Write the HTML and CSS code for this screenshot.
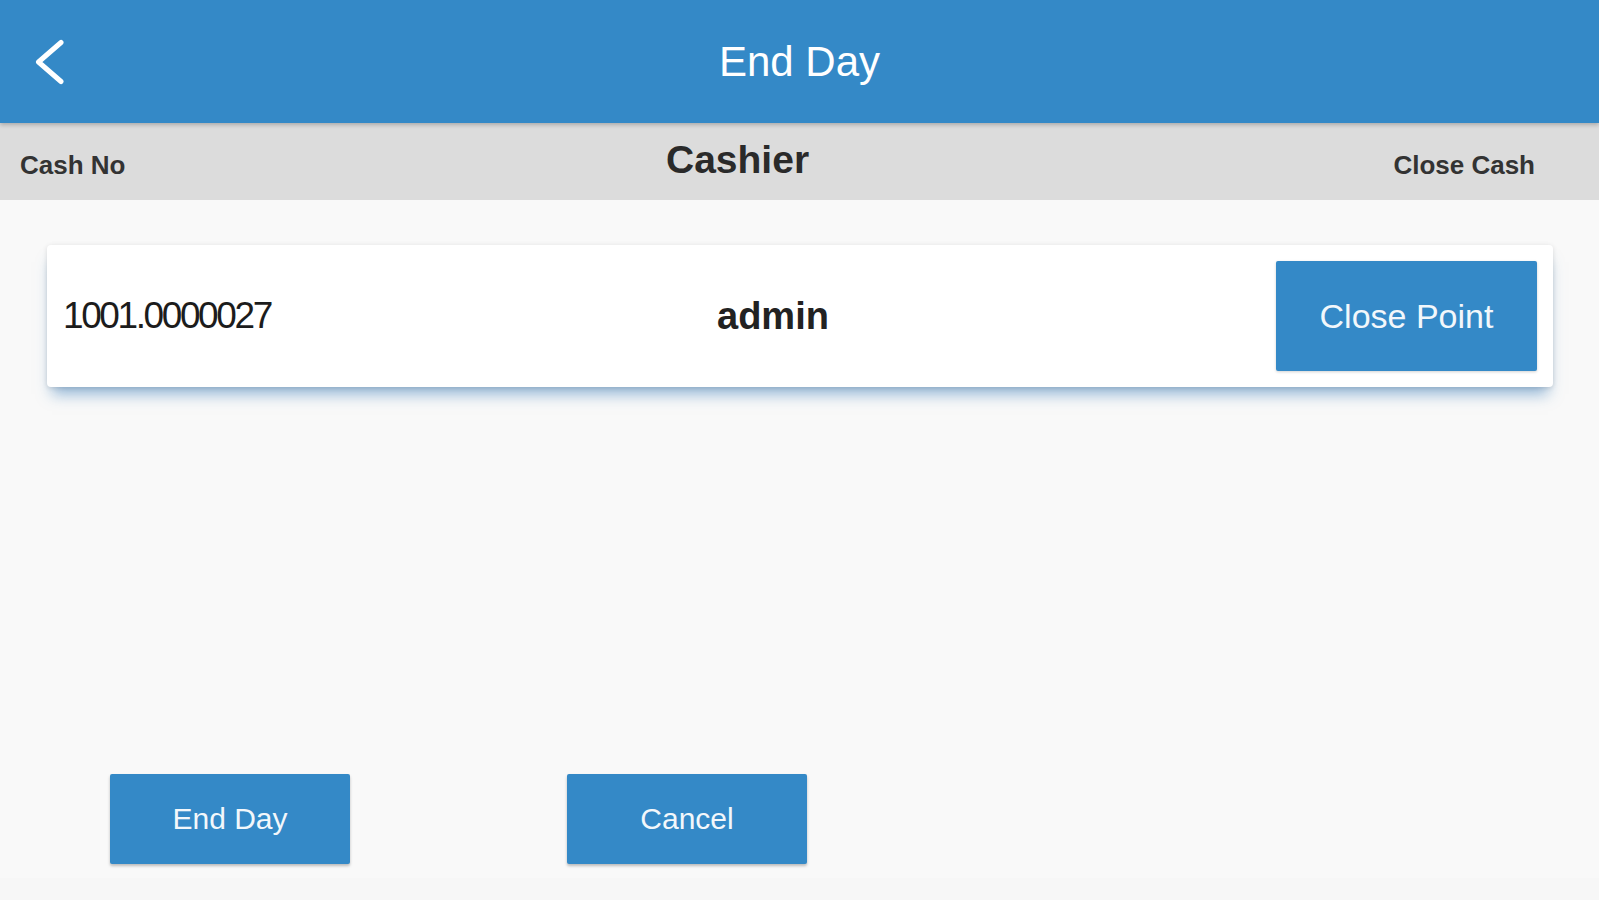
FILE: index.html
```html
<!DOCTYPE html>
<html lang="en">
<head>
<meta charset="utf-8">
<title>End Day</title>
<link rel="stylesheet" href="styles.css">
</head>
<body>
<div class="page">
  <header class="topbar">
    <div class="back">
      <svg class="back-icon" width="30" height="46" viewBox="0 0 30 46" aria-hidden="true">
        <polyline points="26,3.5 3.5,23 26,42.5" fill="none" stroke="#ffffff" stroke-width="5" stroke-linecap="round" stroke-linejoin="round"/>
      </svg>
    </div>
    <h1 class="title">End Day</h1>
    <div class="spacer"></div>
  </header>

  <div class="colbar">
    <span class="col-label col-cash">Cash No</span>
    <span class="col-title">Cashier</span>
    <span class="col-label col-close">Close Cash</span>
  </div>

  <main class="content">
    <div class="card">
      <span class="cash-no">1001.0000027</span>
      <span class="cashier">admin</span>
      <button class="btn btn-close">Close Point</button>
    </div>

    <div class="actions">
      <button class="btn btn-action">End Day</button>
      <button class="btn btn-action">Cancel</button>
    </div>
  </main>

  <footer class="footer"></footer>
</div>
</body>
</html>
```

FILE: styles.css
```css
* {
  box-sizing: border-box;
}

html, body {
  margin: 0;
  padding: 0;
  height: 100%;
}

body {
  font-family: "Liberation Sans", Arial, Helvetica, sans-serif;
  background: #f9f9f9;
  color: #222;
}

.page {
  height: 900px;
  display: flex;
  flex-direction: column;
}

.topbar {
  position: relative;
  z-index: 2;
  height: 123px;
  flex: none;
  background: #3489c7;
  display: grid;
  grid-template-columns: 1fr auto 1fr;
  align-items: center;
  box-shadow: 0 2px 4px rgba(0, 0, 0, 0.22);
}

.back {
  padding-left: 35px;
  display: flex;
  align-items: center;
}

.back-icon {
  display: block;
}

.title {
  margin: 0;
  font-size: 42px;
  font-weight: normal;
  color: #ffffff;
}

.colbar {
  height: 77px;
  flex: none;
  background: #dcdcdc;
  display: grid;
  grid-template-columns: 646px auto 1fr;
  align-items: center;
  padding: 0 64px 0 20px;
}

.col-label {
  font-size: 26px;
  font-weight: bold;
  color: #333;
  padding-top: 8px;
}

.col-close {
  justify-self: end;
}

.col-title {
  font-size: 39px;
  font-weight: bold;
  color: #2a2a2a;
  padding-bottom: 4px;
}

.content {
  flex: 1;
  display: flex;
  flex-direction: column;
  padding: 45px 46px 14px 47px;
}

.card {
  height: 142px;
  background: #ffffff;
  border-radius: 4px;
  display: grid;
  grid-template-columns: 654px auto 1fr;
  align-items: center;
  padding: 16px 16px;
  box-shadow: 0 1px 5px rgba(0, 0, 0, 0.12), 0 12px 14px -5px rgba(60, 125, 185, 0.55);
}

.cash-no {
  font-size: 37px;
  letter-spacing: -2.4px;
  color: #1c1c1c;
}

.cashier {
  font-size: 38px;
  font-weight: bold;
  color: #222;
}

.btn {
  font-family: "Liberation Sans", Arial, Helvetica, sans-serif;
  background: #3489c7;
  color: #f2f7fb;
  border: none;
  border-radius: 2px;
  cursor: pointer;
}

.btn-close {
  justify-self: end;
  width: 261px;
  height: 110px;
  font-size: 34px;
  box-shadow: 0 1px 3px rgba(0, 0, 0, 0.18);
}

.actions {
  margin-top: auto;
  display: flex;
  gap: 217px;
  padding-left: 63px;
}

.btn-action {
  width: 240px;
  height: 90px;
  font-size: 30px;
  box-shadow: 0 2px 3px rgba(0, 0, 0, 0.25);
}

.footer {
  height: 22px;
  flex: none;
  background: #f7f7f7;
}
```
